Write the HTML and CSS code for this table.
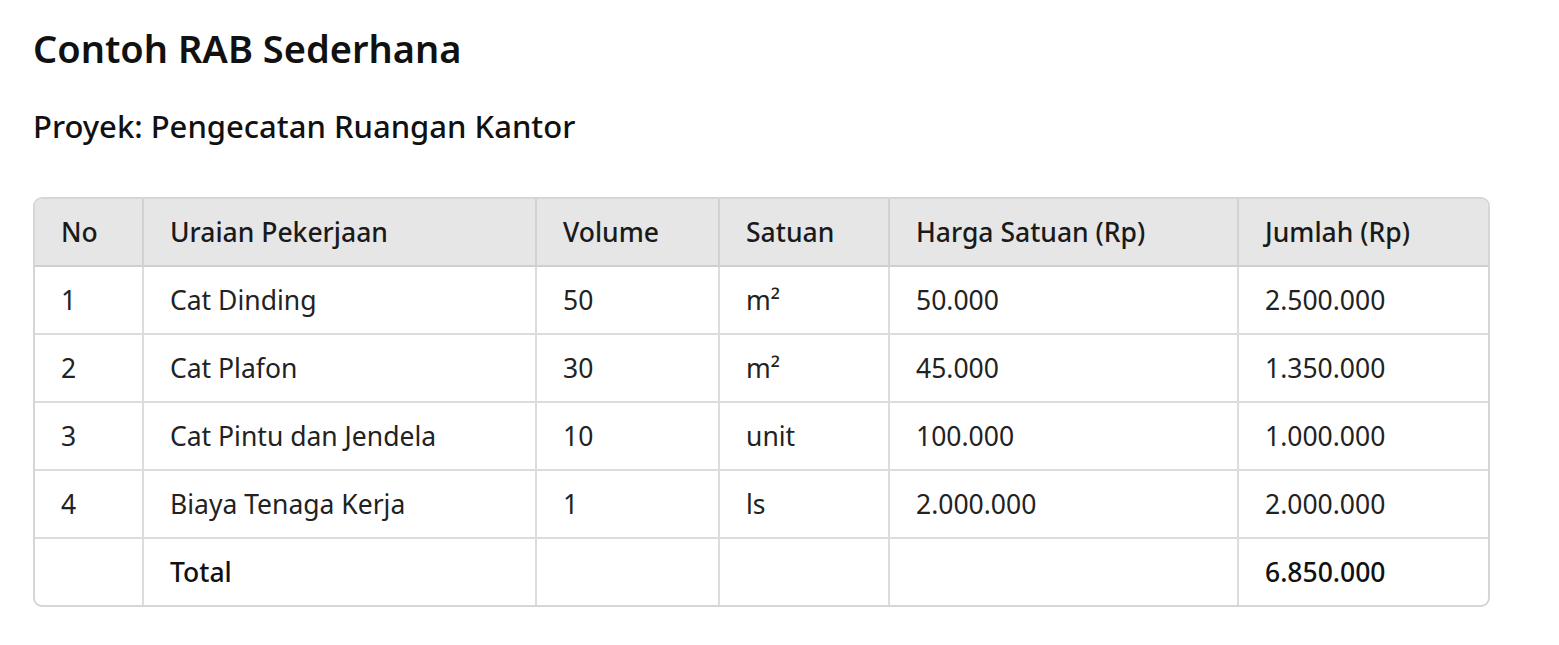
FILE: index.html
```html
<!DOCTYPE html>
<html lang="id">
<head>
<meta charset="utf-8">
<link rel="stylesheet" href="styles.css">
</head>
<body>
<main class="page">
  <h1 class="title">Contoh RAB Sederhana</h1>
  <h2 class="subtitle">Proyek: Pengecatan Ruangan Kantor</h2>
  <div class="table-wrap">
    <table class="rab">
      <colgroup>
        <col class="c-no"><col class="c-uraian"><col class="c-vol"><col class="c-sat"><col class="c-harga"><col class="c-jumlah">
      </colgroup>
      <thead>
        <tr><th>No</th><th>Uraian Pekerjaan</th><th>Volume</th><th>Satuan</th><th>Harga Satuan (Rp)</th><th>Jumlah (Rp)</th></tr>
      </thead>
      <tbody>
        <tr><td>1</td><td>Cat Dinding</td><td>50</td><td>m²</td><td>50.000</td><td>2.500.000</td></tr>
        <tr><td>2</td><td>Cat Plafon</td><td>30</td><td>m²</td><td>45.000</td><td>1.350.000</td></tr>
        <tr><td>3</td><td>Cat Pintu dan Jendela</td><td>10</td><td>unit</td><td>100.000</td><td>1.000.000</td></tr>
        <tr><td>4</td><td>Biaya Tenaga Kerja</td><td>1</td><td>ls</td><td>2.000.000</td><td>2.000.000</td></tr>
        <tr class="total"><td></td><td><strong>Total</strong></td><td></td><td></td><td></td><td><strong>6.850.000</strong></td></tr>
      </tbody>
    </table>
  </div>
</main>
</body>
</html>
```
FILE: styles.css
```css
html, body {
  margin: 0;
  padding: 0;
  background: #ffffff;
}
body {
  font-family: "Noto Sans", "Open Sans", sans-serif;
  color: #1a1a1a;
}
.page {
  padding: 22px 33px 20px 33px;
}
.title {
  margin: 0;
  font-size: 38px;
  font-weight: 600;
  line-height: 52px;
  color: #111;
}
.subtitle {
  margin: 30px 0 0 0;
  font-size: 31px;
  font-weight: 500;
  line-height: 44px;
  color: #111;
}
.table-wrap {
  margin-top: 49px;
  width: 1457px;
}
.rab {
  width: 100%;
  border-collapse: separate;
  border-spacing: 0;
  border: 2px solid #d6d6d6;
  border-radius: 9px;
  overflow: hidden;
  table-layout: fixed;
  font-size: 26.5px;
}
.c-no { width: 109px; }
.c-uraian { width: 393px; }
.c-vol { width: 183px; }
.c-sat { width: 170px; }
.c-harga { width: 349px; }
.c-jumlah { width: auto; }
.rab th, .rab td {
  text-align: left;
  padding: 0 0 0 26px;
  height: 66px;
  border-right: 2px solid #dcdcdc;
  border-bottom: 2px solid #dcdcdc;
  color: #222;
}
.rab th:last-child, .rab td:last-child { border-right: none; }
.rab tr:last-child td { border-bottom: none; }
.rab th {
  background: #e6e6e6;
  font-size: 26.5px;
  font-weight: 500;
  color: #1a1a1a;
  border-bottom-color: #cfcfcf;
  border-right-color: #d2d2d2;
}
.rab td { font-weight: 400; }
.rab strong { font-weight: 500; color: #111; }
```
